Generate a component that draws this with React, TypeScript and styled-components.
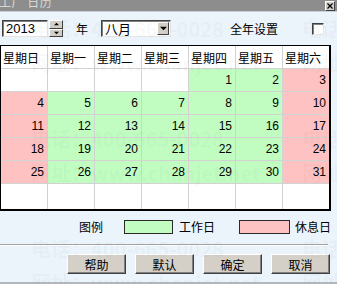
import React from "react";
import styled, { createGlobalStyle } from "styled-components";

const CJK = `"Noto Sans CJK SC", "Liberation Sans", sans-serif`;
const SANS = `"Liberation Sans", "Noto Sans CJK SC", sans-serif`;

const GlobalStyle = createGlobalStyle`
  html, body { margin: 0; padding: 0; background: #ebf3fb; }
  body { width: 337px; height: 284px; overflow: hidden; font-family: ${SANS}; }
  * { box-sizing: border-box; }
`;

const Window = styled.div`
  position: relative;
  width: 337px;
  height: 284px;
  display: flex;
  flex-direction: column;
  overflow: hidden;
  background: #ebf3fb;
`;

const TitleBar = styled.div`
  height: 12px;
  flex: none;
  display: flex;
  justify-content: space-between;
  align-items: flex-start;
  background: #8d8d8d;
  border-bottom: 1px solid #c7ced6;
  overflow: hidden;
`;

const TitleText = styled.div`
  font-family: ${CJK};
  font-size: 12px;
  line-height: 14px;
  margin-top: -5px;
  margin-left: -1px;
  color: #d9d9d9;
  letter-spacing: 0.5px;
`;

const CloseBox = styled.div`
  width: 10px;
  height: 10px;
  margin: 1px 2px 0 0;
  background: #d4d0c8;
  border: 1px solid;
  border-color: #ffffff #404040 #404040 #ffffff;
  display: flex;
  align-items: center;
  justify-content: center;
`;

const Toolbar = styled.div`
  display: flex;
  align-items: center;
  height: 17px;
  margin-top: 8px;
  padding-left: 2px;
  flex: none;
`;

const Sunken = styled.div`
  background: #ffffff;
  border: 1px solid;
  border-color: #404040 #e4e4e4 #e4e4e4 #404040;
  box-shadow: inset 1px 1px 0 #808080;
`;

const YearInput = styled(Sunken)`
  width: 46px;
  height: 17px;
  font-family: ${SANS};
  font-size: 13px;
  line-height: 15px;
  padding-left: 3px;
  color: #000;
`;

const Spinner = styled.div`
  width: 14px;
  height: 17px;
  margin-left: 1px;
  display: flex;
  flex-direction: column;
`;

const SpinButton = styled.div`
  flex: 1;
  background: #d4d0c8;
  border: 1px solid;
  border-color: #ffffff #404040 #404040 #ffffff;
  display: flex;
  align-items: center;
  justify-content: center;
`;

const Label = styled.span<{ $ml: number }>`
  font-family: ${CJK};
  font-size: 12px;
  line-height: 14px;
  color: #000;
  margin-left: ${(p) => p.$ml}px;
  white-space: nowrap;
`;

const MonthSelect = styled(Sunken)`
  width: 70px;
  height: 17px;
  margin-left: 13px;
  display: flex;
  align-items: center;
  justify-content: space-between;
`;

const MonthText = styled.span`
  font-family: ${CJK};
  font-size: 13px;
  line-height: 15px;
  padding-left: 3px;
  color: #000;
`;

const DropButton = styled.div`
  width: 12px;
  height: 13px;
  margin-right: 1px;
  background: #d4d0c8;
  border: 1px solid;
  border-color: #ffffff #404040 #404040 #ffffff;
  display: flex;
  align-items: center;
  justify-content: center;
`;

const CheckBox = styled(Sunken)`
  width: 12px;
  height: 12px;
  margin-left: 34px;
`;

const Calendar = styled.div`
  margin-top: 8px;
  width: 331px;
  display: grid;
  grid-template-columns: repeat(7, 46px);
  grid-template-rows: 22px repeat(5, 22px) 25px;
  gap: 1px;
  background: #d2d2d2;
  border-style: solid;
  border-color: #000;
  border-width: 1px 2px 2px 1px;
  flex: none;
`;

const HeaderCell = styled.div`
  background: #ffffff;
  font-family: ${CJK};
  font-size: 12px;
  color: #000;
  padding-left: 2px;
  display: flex;
  align-items: center;
  white-space: nowrap;
`;

type Kind = "work" | "rest" | "empty";
const cellColors: Record<Kind, string> = {
  work: "#c1fdc1",
  rest: "#ffc2c2",
  empty: "#ffffff",
};

const DayCell = styled.div<{ $kind: Kind }>`
  background: ${(p) => cellColors[p.$kind]};
  font-family: ${SANS};
  font-size: 12px;
  color: #000;
  padding-right: 3px;
  display: flex;
  align-items: center;
  justify-content: flex-end;
`;

const Legend = styled.div`
  display: flex;
  align-items: center;
  height: 14px;
  margin-top: 9px;
  flex: none;
`;

const Swatch = styled.div<{ $color: string; $ml: number; $w: number }>`
  width: ${(p) => p.$w}px;
  height: 14px;
  margin-left: ${(p) => p.$ml}px;
  background: ${(p) => p.$color};
  border: 1px solid #2a2a2a;
`;

const Separator = styled.div`
  width: 328px;
  height: 2px;
  margin-top: 10px;
  border-top: 1px solid #a3a3a3;
  border-bottom: 1px solid #ffffff;
  flex: none;
`;

const ButtonRow = styled.div`
  display: flex;
  gap: 9px;
  padding-left: 67px;
  margin-top: 8px;
  flex: none;
`;

const Button = styled.div`
  width: 59px;
  height: 20px;
  background: #d4d0c8;
  border: 1px solid;
  border-color: #ffffff #404040 #404040 #ffffff;
  box-shadow: inset -1px -1px 0 #808080;
  font-family: ${CJK};
  font-size: 12px;
  color: #000;
  display: flex;
  align-items: center;
  justify-content: center;
`;

const BottomEdge = styled.div`
  margin-top: auto;
  height: 2px;
  background: #b4b8bc;
  flex: none;
`;

const Watermark = styled.div`
  position: absolute;
  inset: 0;
  pointer-events: none;
  z-index: 2;
`;

const WatermarkLine = styled.div<{ $top: number; $left: number }>`
  position: absolute;
  top: ${(p) => p.$top}px;
  left: ${(p) => p.$left}px;
  font-family: ${CJK};
  font-size: 20px;
  font-weight: 700;
  line-height: 22px;
  color: rgba(60, 70, 80, 0.045);
  white-space: nowrap;
`;

const Arrow = ({ dir, size = 5 }: { dir: "up" | "down"; size?: number }) => (
  <svg width={size} height={Math.ceil(size / 2) + 1} viewBox="0 0 6 3" style={{ display: "block" }}>
    {dir === "up" ? <polygon points="0,3 6,3 3,0" fill="#000" /> : <polygon points="0,0 6,0 3,3" fill="#000" />}
  </svg>
);

const weekdays = ["星期日", "星期一", "星期二", "星期三", "星期四", "星期五", "星期六"];

function buildDays(): { day: number | null; kind: Kind }[] {
  const out: { day: number | null; kind: Kind }[] = [];
  const firstDow = 4; // Aug 1 2013 is Thursday
  for (let i = 0; i < 42; i++) {
    const d = i - firstDow + 1;
    const dow = i % 7;
    if (d < 1 || d > 31) out.push({ day: null, kind: "empty" });
    else out.push({ day: d, kind: dow === 0 || dow === 6 ? "rest" : "work" });
  }
  return out;
}

const watermarks = [0, 110, 220];

export default function App() {
  const days = buildDays();
  return (
    <>
      <GlobalStyle />
      <Window>
        <TitleBar>
          <TitleText>工厂 日历</TitleText>
          <CloseBox>
            <svg width="6" height="6" viewBox="0 0 6 6">
              <path d="M0.5 0.5 L5.5 5.5 M5.5 0.5 L0.5 5.5" stroke="#000" strokeWidth="1.2" />
            </svg>
          </CloseBox>
        </TitleBar>
        <Toolbar>
          <YearInput>2013</YearInput>
          <Spinner>
            <SpinButton>
              <Arrow dir="up" />
            </SpinButton>
            <SpinButton>
              <Arrow dir="down" />
            </SpinButton>
          </Spinner>
          <Label $ml={13}>年</Label>
          <MonthSelect>
            <MonthText>八月</MonthText>
            <DropButton>
              <Arrow dir="down" size={7} />
            </DropButton>
          </MonthSelect>
          <Label $ml={59}>全年设置</Label>
          <CheckBox />
        </Toolbar>
        <Calendar>
          {weekdays.map((w) => (
            <HeaderCell key={w}>{w}</HeaderCell>
          ))}
          {days.map((d, i) => (
            <DayCell key={i} $kind={d.kind}>
              {d.day ?? ""}
            </DayCell>
          ))}
        </Calendar>
        <Legend>
          <Label $ml={79}>图例</Label>
          <Swatch $color="#c1fdc1" $ml={21} $w={49} />
          <Label $ml={6}>工作日</Label>
          <Swatch $color="#ffc2c2" $ml={24} $w={51} />
          <Label $ml={5}>休息日</Label>
        </Legend>
        <Separator />
        <ButtonRow>
          <Button>帮助</Button>
          <Button>默认</Button>
          <Button>确定</Button>
          <Button>取消</Button>
        </ButtonRow>
        <BottomEdge />
        <Watermark>
          {watermarks.map((t) => (
            <React.Fragment key={t}>
              <WatermarkLine $top={18 + t} $left={31}>电话：400-665-0028</WatermarkLine>
              <WatermarkLine $top={18 + t} $left={302}>电话</WatermarkLine>
              <WatermarkLine $top={52 + t} $left={31}>网址：www.chanjet.net</WatermarkLine>
              <WatermarkLine $top={52 + t} $left={302}>网址</WatermarkLine>
            </React.Fragment>
          ))}
        </Watermark>
      </Window>
    </>
  );
}
